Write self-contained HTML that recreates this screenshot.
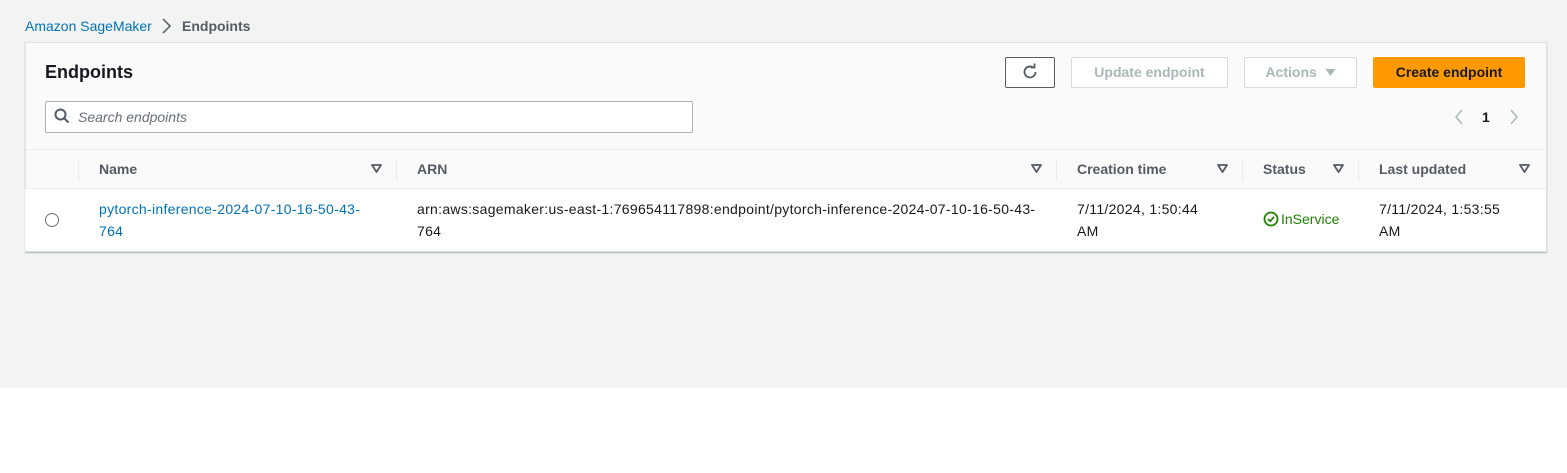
<!DOCTYPE html>
<html><head><style>
body{margin:0;width:1567px;height:473px;background:#fff;font-family:"Liberation Sans",sans-serif;position:relative;overflow:hidden}
.bg{position:absolute;left:0;top:0;width:1567px;height:388px;background:#f2f3f3}
.a{position:absolute;white-space:nowrap}
.panel{position:absolute;left:25px;top:42px;width:1520px;height:208px;background:#fafafa;border:1px solid #e0e0e0;box-shadow:0 1px 1px #aab7b8;}
.btn{position:absolute;top:57px;height:31px;box-sizing:border-box;border:1px solid #d5dbdb;background:#fff;border-radius:2px;font-size:14px;font-weight:bold;color:#aab7b8;text-align:center;line-height:29px}
.th{position:absolute;top:161px;font-size:14px;font-weight:bold;color:#545b64}
.tri{position:absolute;top:164px}
.sep{position:absolute;top:159px;width:1px;height:22px;background:#eaeded}
.td{position:absolute;font-size:14px;color:#16191f;line-height:22px;letter-spacing:0.3px}
</style></head><body>
<div class="bg"></div>
<div class="a" style="left:25px;top:18px;font-size:14px;color:#0073bb">Amazon SageMaker</div>
<svg class="a" style="left:160px;top:17px" width="12" height="18"><path d="M3 2l7 7-7 7" fill="none" stroke="#545b64" stroke-width="1.5"/></svg>
<div class="a" style="left:182px;top:18px;font-size:14px;font-weight:bold;color:#545b64">Endpoints</div>
<div class="panel"></div>
<div class="a" style="left:25px;top:188px;width:1521px;height:62px;background:#fff;border-top:1px solid #eaeded"></div>
<div class="a" style="left:26px;top:149px;width:1519px;height:1px;background:#eaeded"></div>
<div class="a" style="left:45px;top:62px;font-size:18px;font-weight:bold;color:#16191f">Endpoints</div>
<div class="a" style="left:45px;top:101px;width:646px;height:30px;border:1px solid #aab7b8;background:#fff;border-radius:2px"></div>
<svg class="a" style="left:54px;top:108px" width="16" height="16"><circle cx="6.5" cy="6.5" r="5" fill="none" stroke="#545b64" stroke-width="2"/><path d="M10 10l4.5 4.5" stroke="#545b64" stroke-width="2"/></svg>
<div class="a" style="left:78px;top:109px;font-size:14px;font-style:italic;color:#687078">Search endpoints</div>
<div class="btn" style="left:1005px;width:50px;border-color:#545b64"><svg width="18" height="18" style="margin-top:5px" viewBox="0 0 18 18"><path d="M14.5 9A5.5 5.5 0 1 1 12.5 4.7" fill="none" stroke="#545b64" stroke-width="1.8"/><path d="M9.5 4.5h4v-4" fill="none" stroke="#545b64" stroke-width="1.8"/></svg></div>
<div class="btn" style="left:1071px;width:157px">Update endpoint</div>
<div class="btn" style="left:1244px;width:113px">Actions &nbsp;<svg width="11" height="9" viewBox="0 0 11 9"><path d="M0.5 1h10l-5 7z" fill="#aab7b8"/></svg></div>
<div class="btn" style="left:1373px;width:152px;background:#ff9900;border-color:#ff9900;color:#16191f">Create endpoint</div>
<svg class="a" style="left:1453px;top:108px" width="12" height="18"><path d="M9 2l-6 7 6 7" fill="none" stroke="#aab7b8" stroke-width="1.5"/></svg>
<div class="a" style="left:1482px;top:109px;font-size:14px;font-weight:bold;color:#16191f">1</div>
<svg class="a" style="left:1508px;top:108px" width="12" height="18"><path d="M3 2l6 7-6 7" fill="none" stroke="#aab7b8" stroke-width="1.5"/></svg>
<div class="sep" style="left:78px"></div><div class="sep" style="left:396px"></div><div class="sep" style="left:1056px"></div><div class="sep" style="left:1242px"></div><div class="sep" style="left:1358px"></div>
<div class="th" style="left:99px">Name</div>
<div class="th" style="left:417px">ARN</div>
<div class="th" style="left:1077px">Creation time</div>
<div class="th" style="left:1263px">Status</div>
<div class="th" style="left:1379px">Last updated</div>
<svg class="tri" style="left:371px" width="11" height="9"><path d="M1 1h9l-4.5 7z" fill="none" stroke="#545b64" stroke-width="1.8" stroke-linejoin="round"/></svg>
<svg class="tri" style="left:1031px" width="11" height="9"><path d="M1 1h9l-4.5 7z" fill="none" stroke="#545b64" stroke-width="1.8" stroke-linejoin="round"/></svg>
<svg class="tri" style="left:1217px" width="11" height="9"><path d="M1 1h9l-4.5 7z" fill="none" stroke="#545b64" stroke-width="1.8" stroke-linejoin="round"/></svg>
<svg class="tri" style="left:1333px" width="11" height="9"><path d="M1 1h9l-4.5 7z" fill="none" stroke="#545b64" stroke-width="1.8" stroke-linejoin="round"/></svg>
<svg class="tri" style="left:1519px" width="11" height="9"><path d="M1 1h9l-4.5 7z" fill="none" stroke="#545b64" stroke-width="1.8" stroke-linejoin="round"/></svg>
<div class="a" style="left:45px;top:213px;width:12px;height:12px;border:1px solid #687078;border-radius:50%;background:#fff"></div>
<div class="td a" style="left:99px;top:198px;color:#0073bb">pytorch-inference-2024-07-10-16-50-43-<br>764</div>
<div class="td a" style="left:417px;top:198px">arn:aws:sagemaker:us-east-1:769654117898:endpoint/pytorch-inference-2024-07-10-16-50-43-<br>764</div>
<div class="td a" style="left:1077px;top:198px">7/11/2024, 1:50:44<br>AM</div>
<svg class="a" style="left:1263px;top:211px" width="16" height="16"><circle cx="8" cy="8" r="6.5" fill="none" stroke="#1d8102" stroke-width="1.8"/><path d="M5 8l2.2 2.2L11 6" fill="none" stroke="#1d8102" stroke-width="1.8"/></svg>
<div class="a" style="left:1281px;top:211px;font-size:14px;color:#1d8102">InService</div>
<div class="td a" style="left:1379px;top:198px">7/11/2024, 1:53:55<br>AM</div>
</body></html>
